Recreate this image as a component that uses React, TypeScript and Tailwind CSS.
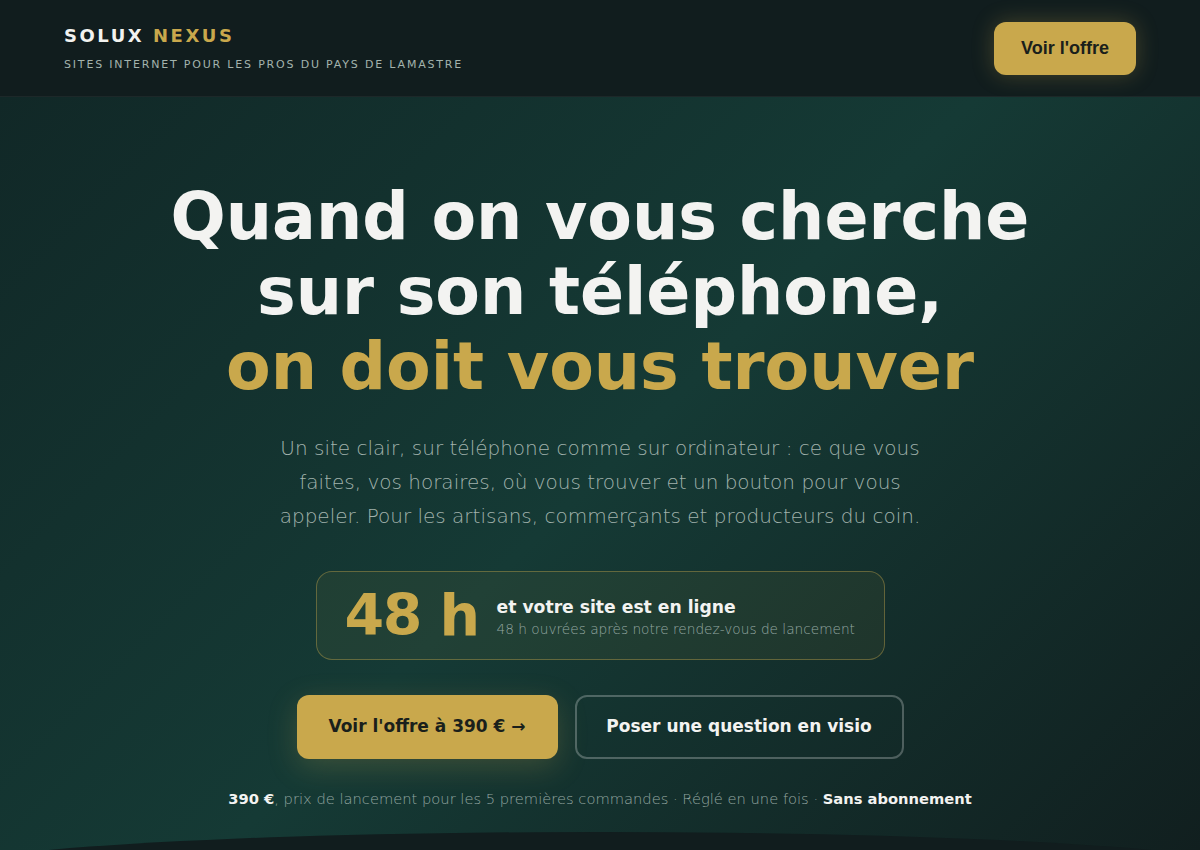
import React from 'react';

const sans = 'font-["DejaVu_Sans","Noto_Sans",sans-serif]';

function Header() {
  return (
    <header className="flex h-[97px] items-center justify-between border-b border-white/5 bg-[#111d1e] px-16">
      <div className="-mt-[1px]">
        <div className="text-[18px] font-bold tracking-[0.14em] text-[#f2f2ef]">
          SOLUX <span className="text-[#c9a84c]">NEXUS</span>
        </div>
        <div className="mt-[8px] text-[11px] tracking-[0.165em] text-[#a3b3ad]">
          SITES INTERNET POUR LES PROS DU PAYS DE LAMASTRE
        </div>
      </div>
      <a
        href="#offre"
        className='flex h-[53px] w-[142px] items-center justify-center rounded-xl bg-[#c9a84c] font-["Liberation_Sans",Arial,sans-serif] text-[18px] font-bold text-[#1a1f1b] shadow-[0_0_22px_rgba(201,168,76,0.28)]'
      >
        Voir l'offre
      </a>
    </header>
  );
}

function Hero() {
  return (
    <section className="flex h-[753px] flex-col items-center overflow-hidden bg-[linear-gradient(135deg,#112827_0%,#153a35_50%,#111f1f_100%)] pt-[82px]">
      <h1 className="text-center text-[65px] font-bold leading-[75px] text-[#f3f3f1]">
        Quand on vous cherche
        <br />
        sur son téléphone,
        <br />
        <span className="text-[#c9a84c]">on doit vous trouver</span>
      </h1>

      <p className="mt-[27px] max-w-[660px] text-center text-[20px] font-light leading-[34px] text-[#a2b3ad]">
        Un site clair, sur téléphone comme sur ordinateur : ce que vous faites, vos horaires, où vous trouver et un
        bouton pour vous appeler. Pour les artisans, commerçants et producteurs du coin.
      </p>

      <div className="mt-[38px] flex h-[92px] w-[569px] items-center gap-[18px] rounded-2xl border border-[#c9a84c]/40 bg-[#c9a84c]/[0.07] px-[28px]">
        <div className="shrink-0 whitespace-nowrap text-[57px] font-bold leading-none tracking-tight text-[#c9a84c]">
          48 h
        </div>
        <div className="whitespace-nowrap pt-[2px]">
          <div className="text-[17.2px] font-bold leading-[24px] text-[#f3f3f1]">et votre site est en ligne</div>
          <div className="text-[13.7px] font-light leading-[20px] text-[#93a6a0]">
            48 h ouvrées après notre rendez-vous de lancement
          </div>
        </div>
      </div>

      <div className="mt-[35px] flex gap-[17px]">
        <a
          href="#offre"
          className="flex h-[64px] w-[261px] items-center justify-center rounded-xl bg-[#c9a84c] text-[17px] font-bold text-[#1a1f1b] shadow-[0_8px_30px_rgba(201,168,76,0.22)]"
        >
          Voir l'offre à 390 € →
        </a>
        <a
          href="#visio"
          className="flex h-[64px] w-[329px] items-center justify-center rounded-xl border-2 border-white/25 text-[17px] font-bold text-[#f3f3f1]"
        >
          Poser une question en visio
        </a>
      </div>

      <p className="mt-[29px] text-[14.7px] font-light leading-[22px] text-[#93a6a0]">
        <b className="font-bold text-[#f3f3f1]">390 €</b>, prix de lancement pour les 5 premières commandes · Réglé en
        une fois · <b className="font-bold text-[#f3f3f1]">Sans abonnement</b>
      </p>

      <div className="mt-auto h-[40px] w-[1320px] shrink-0 translate-y-[22px] rounded-t-[660px_40px] bg-[#111d1e]" />
    </section>
  );
}

export default function App() {
  return (
    <div className={`min-h-[850px] bg-[#111d1e] ${sans}`}>
      <Header />
      <Hero />
    </div>
  );
}
